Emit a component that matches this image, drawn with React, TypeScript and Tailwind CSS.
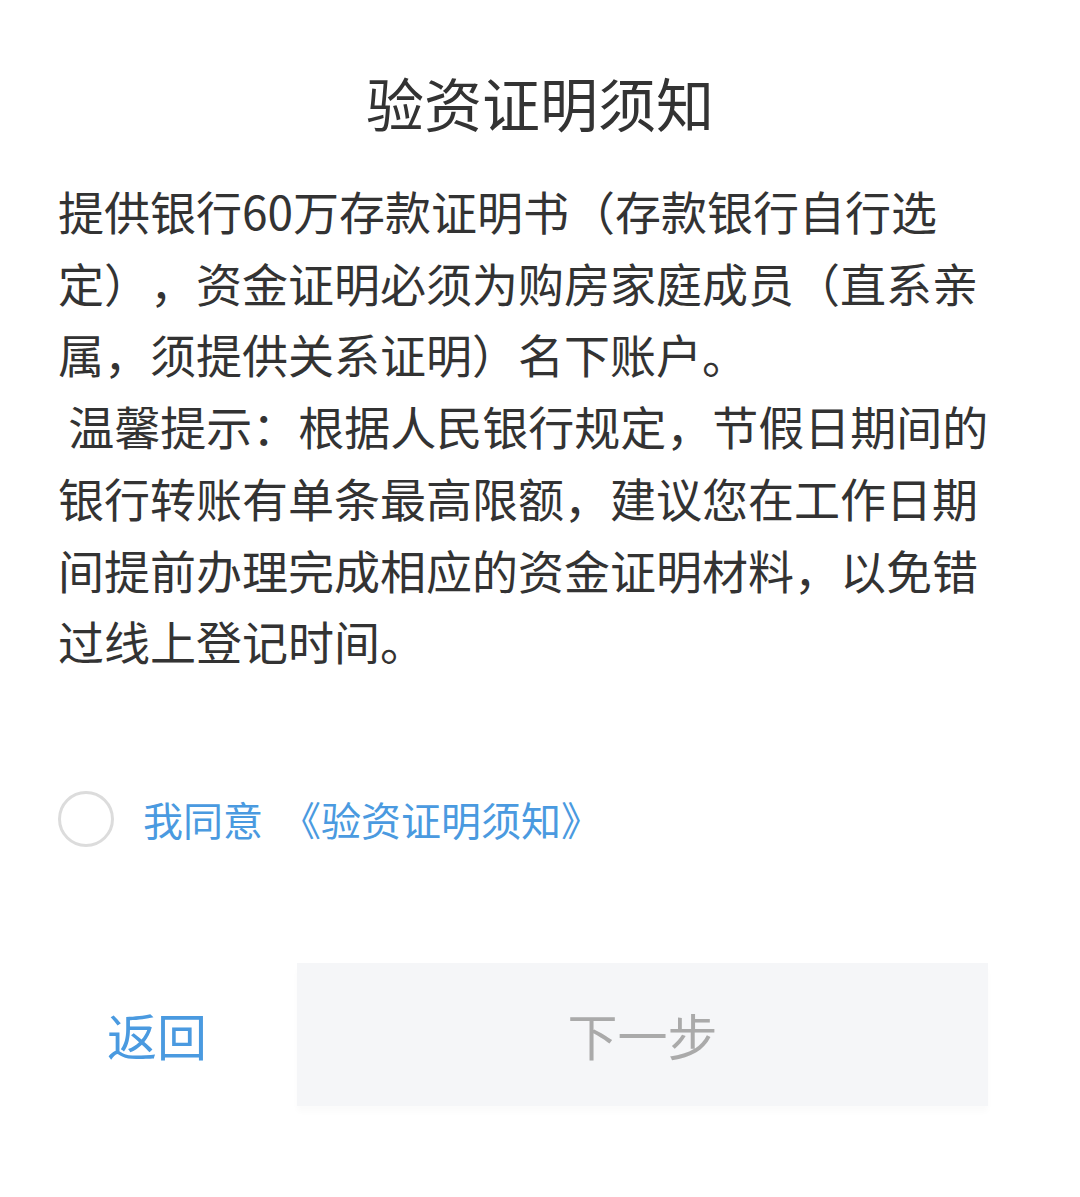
import React from "react";

const font = { fontFamily: '"Noto Sans CJK SC", "Noto Sans", sans-serif' };

export default function App() {
  const lines = [
    "提供银行60万存款证明书（存款银行自行选",
    "定），资金证明必须为购房家庭成员（直系亲",
    "属，须提供关系证明）名下账户。",
    "\u00a0温馨提示：根据人民银行规定，节假日期间的",
    "银行转账有单条最高限额，建议您在工作日期",
    "间提前办理完成相应的资金证明材料，以免错",
    "过线上登记时间。",
  ];
  return (
    <div className="w-[1080px] h-[1197px] bg-white flex flex-col [text-spacing-trim:space-all]" style={font}>
      <h1 className="mt-[63px] text-center text-[58px] leading-[78px] text-[#333333] font-normal">
        验资证明须知
      </h1>
      <div className="mt-[34px] pl-[58px] text-[46px] leading-[71.7px] text-[#333333] whitespace-nowrap">
        {lines.map((l, i) => (
          <div key={i}>{l}</div>
        ))}
      </div>
      <div className="mt-[114px] pl-[58px] flex items-center">
        <div className="w-[56px] h-[56px] rounded-full border-[3px] border-[#dcdcdc]" />
        <span className="ml-[29px] text-[40px] leading-[56px] text-[#4a9ae0] whitespace-pre">
          我同意  《验资证明须知》
        </span>
      </div>
      <div className="mt-[116px] flex items-center pl-[58px] pr-[92px]">
        <div className="w-[198px] flex justify-center text-[50px] text-[#4a9ae0]">返回</div>
        <div className="ml-[41px] flex-1 h-[143px] bg-[#f5f6f8] flex items-center justify-center text-[50px] text-[#aaaaaa] shadow-[0_6px_6px_rgba(0,0,0,0.02)]">
          下一步
        </div>
      </div>
    </div>
  );
}
